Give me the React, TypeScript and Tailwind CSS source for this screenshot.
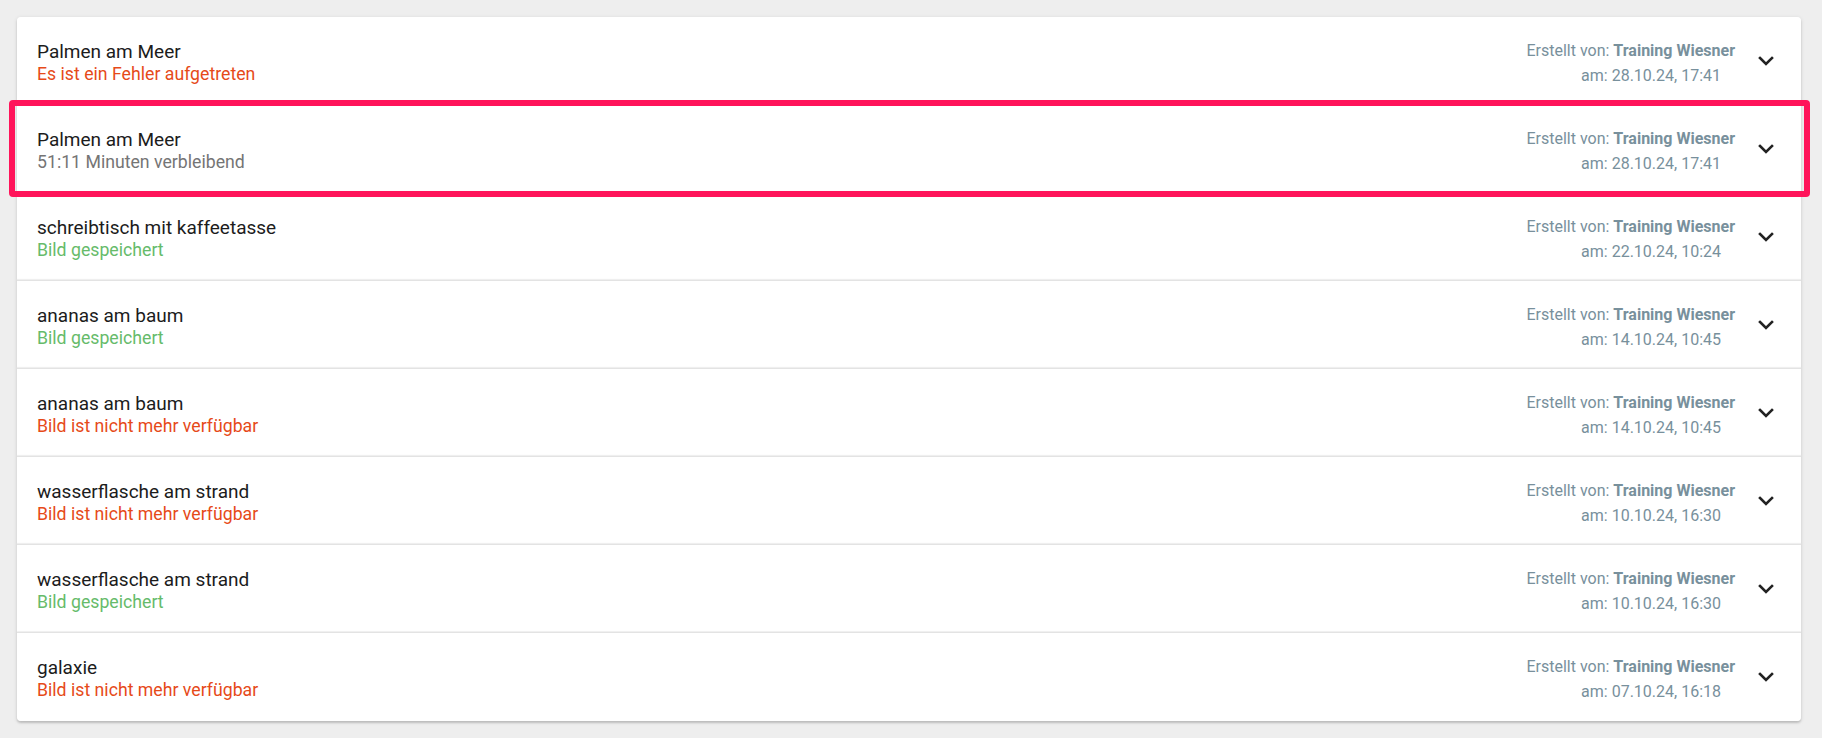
import React from "react";

type Row = { title: string; status: string; kind: "error" | "ok" | "pending"; date: string };

const rows: Row[] = [
  { title: "Palmen am Meer", status: "Es ist ein Fehler aufgetreten", kind: "error", date: "28.10.24, 17:41" },
  { title: "Palmen am Meer", status: "51:11 Minuten verbleibend", kind: "pending", date: "28.10.24, 17:41" },
  { title: "schreibtisch mit kaffeetasse", status: "Bild gespeichert", kind: "ok", date: "22.10.24, 10:24" },
  { title: "ananas am baum", status: "Bild gespeichert", kind: "ok", date: "14.10.24, 10:45" },
  { title: "ananas am baum", status: "Bild ist nicht mehr verfügbar", kind: "error", date: "14.10.24, 10:45" },
  { title: "wasserflasche am strand", status: "Bild ist nicht mehr verfügbar", kind: "error", date: "10.10.24, 16:30" },
  { title: "wasserflasche am strand", status: "Bild gespeichert", kind: "ok", date: "10.10.24, 16:30" },
  { title: "galaxie", status: "Bild ist nicht mehr verfügbar", kind: "error", date: "07.10.24, 16:18" },
];

function Chevron() {
  return (
    <svg width="16" height="10" viewBox="0 0 16 10" className="shrink-0">
      <polyline points="2,2 8,8 14,2" fill="none" stroke="#222222" strokeWidth="2.6" strokeLinecap="square" />
    </svg>
  );
}

export default function App() {
  return (
    <div
      className="min-h-[738px] w-full bg-[#eeeeee] pl-[17px] pr-[21px] pt-[17px]"
      style={{ fontFamily: "Roboto, 'Noto Sans', sans-serif" }}
    >
      <div className="flex flex-col rounded-[4px] shadow-[0_2px_2px_0_rgba(0,0,0,0.14),0_1px_4px_0_rgba(0,0,0,0.12)]">
        {rows.map((r, i) => (
          <div
            key={i}
            className={
              "relative flex h-[88px] items-center bg-white pl-[20px] pr-[27px] pt-[3px] " +
              (i === 0 ? "rounded-t-[4px] " : "shadow-[0_-1px_0_0_#e3e3e3,0_-2px_1px_0_#efefef] ") +
              (i === rows.length - 1 ? "rounded-b-[4px] " : "")
            }
          >
            <div className="flex flex-1 flex-col">
              <div className="text-[19px] leading-[23px] text-[#1c1c1c]">{r.title}</div>
              <div
                className={
                  "text-[17.7px] leading-[23px] " +
                  (r.kind === "error" ? "text-[#e64a19]" : r.kind === "ok" ? "text-[#66bb6a]" : "text-[#757575]")
                }
              >
                {r.status}
              </div>
            </div>
            <div className="flex items-center">
              <div className="flex flex-col items-end text-[16px] leading-[25px] text-[#78909c]">
                <div>
                  Erstellt von: <span className="font-bold">Training Wiesner</span>
                </div>
                <div className="mr-[14px]">am: {r.date}</div>
              </div>
              <div className="-mt-[3px] ml-[23px]">
                <Chevron />
              </div>
            </div>
            {i === 1 && (
              <div className="pointer-events-none absolute -bottom-[4px] -left-[8px] -right-[9px] -top-[5px] z-10 rounded-[4px] border-[6px] border-[#ff145a]" />
            )}
          </div>
        ))}
      </div>
    </div>
  );
}
